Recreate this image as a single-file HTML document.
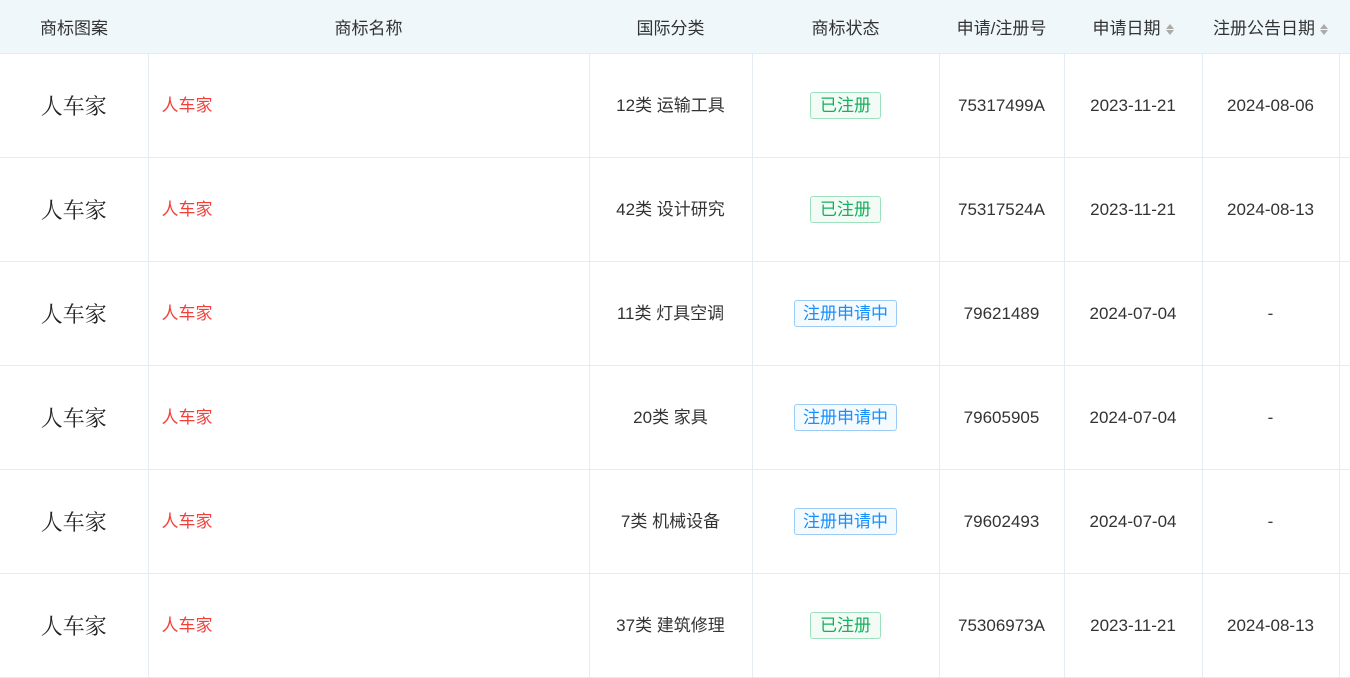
<!DOCTYPE html>
<html><head><meta charset="utf-8"><style>
body{margin:0;width:1350px;height:647px;overflow:hidden;background:#fff;font-family:"Liberation Sans","Noto Sans CJK SC",sans-serif;color:#333;}
table{border-collapse:collapse;table-layout:fixed;width:1360px;position:absolute;left:0;top:0}
th{height:53px;background:#eff7fb;font-weight:normal;font-size:17px;color:#333;border-bottom:1px solid #e3ecf4;padding:0;text-align:center}
td{height:103px;border-bottom:1px solid #e3ecf4;border-left:1px solid #e3ecf4;padding:0;text-align:center;font-size:17px;line-height:20px}
td:first-child{border-left:none}
.img{font-family:"Noto Serif CJK SC",serif;font-size:22px;color:#222}
.name{text-align:left;padding-left:13px;color:#f5403a}
.tag{display:inline-block;padding:0 9px;height:25px;line-height:25px;border-radius:3px;font-size:17px}
.g{color:#14b05a;border:1px solid #9fe0bd;background:#f3fbf6}
.b{color:#1890ff;border:1px solid #9ccbf4;background:#f5faff;padding:0 8px}
.s{display:inline-block;vertical-align:middle;margin-left:5px;width:8px;height:0;position:relative;top:-1px}
.s:before{content:"";position:absolute;border:4px solid transparent;border-bottom:5px solid #aaa;top:-9px;left:0}
.s:after{content:"";position:absolute;border:4px solid transparent;border-top:5px solid #aaa;top:1px;left:0}
</style></head><body>
<table>
<colgroup><col style="width:148px"><col style="width:441px"><col style="width:163px"><col style="width:187px"><col style="width:125px"><col style="width:138px"><col style="width:137px"><col style="width:21px"></colgroup>
<tr><th>商标图案</th><th>商标名称</th><th>国际分类</th><th>商标状态</th><th>申请/注册号</th><th>申请日期<span class="s"></span></th><th>注册公告日期<span class="s"></span></th><th></th></tr>
<tr><td class="img">人车家</td><td class="name">人车家</td><td>12类 运输工具</td><td><span class="tag g">已注册</span></td><td>75317499A</td><td>2023-11-21</td><td>2024-08-06</td><td></td></tr>
<tr><td class="img">人车家</td><td class="name">人车家</td><td>42类 设计研究</td><td><span class="tag g">已注册</span></td><td>75317524A</td><td>2023-11-21</td><td>2024-08-13</td><td></td></tr>
<tr><td class="img">人车家</td><td class="name">人车家</td><td>11类 灯具空调</td><td><span class="tag b">注册申请中</span></td><td>79621489</td><td>2024-07-04</td><td>-</td><td></td></tr>
<tr><td class="img">人车家</td><td class="name">人车家</td><td>20类 家具</td><td><span class="tag b">注册申请中</span></td><td>79605905</td><td>2024-07-04</td><td>-</td><td></td></tr>
<tr><td class="img">人车家</td><td class="name">人车家</td><td>7类 机械设备</td><td><span class="tag b">注册申请中</span></td><td>79602493</td><td>2024-07-04</td><td>-</td><td></td></tr>
<tr><td class="img">人车家</td><td class="name">人车家</td><td>37类 建筑修理</td><td><span class="tag g">已注册</span></td><td>75306973A</td><td>2023-11-21</td><td>2024-08-13</td><td></td></tr>
</table>
</body></html>
